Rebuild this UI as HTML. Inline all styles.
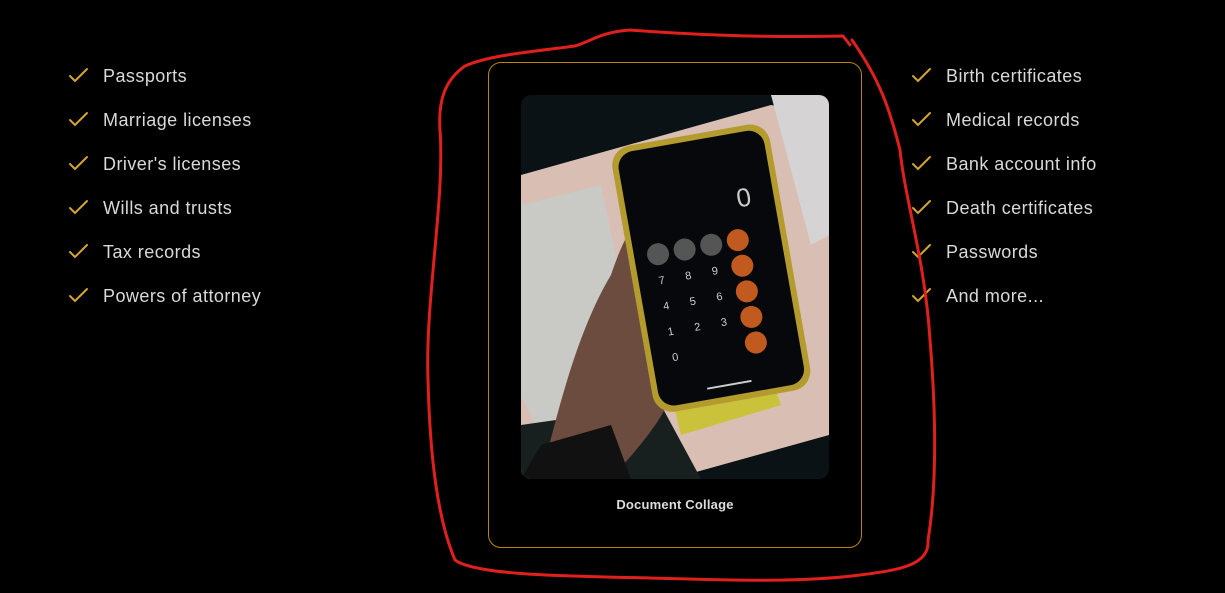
<!DOCTYPE html>
<html><head><style>
html,body{margin:0;padding:0;background:#000;width:1225px;height:593px;overflow:hidden;font-family:"Liberation Sans",sans-serif;}
.li{position:absolute;color:#d9d9d9;font-size:18px;line-height:20px;letter-spacing:0.45px;}
.card{position:absolute;left:488px;top:62px;width:374px;height:486px;border:1px solid #b8860b;border-radius:13px;box-sizing:border-box;}
.img{position:absolute;left:521px;top:95px;width:308px;height:384px;border-radius:10px;overflow:hidden;}
.cap{position:absolute;left:488px;width:374px;top:497px;text-align:center;color:#ddd;font-size:13px;font-weight:bold;letter-spacing:0.2px;}
</style></head><body>
<div class="li" style="left:103px;top:66px">Passports</div>
<div class="li" style="left:103px;top:110px">Marriage licenses</div>
<div class="li" style="left:103px;top:154px">Driver's licenses</div>
<div class="li" style="left:103px;top:198px">Wills and trusts</div>
<div class="li" style="left:103px;top:242px">Tax records</div>
<div class="li" style="left:103px;top:286px">Powers of attorney</div>
<div class="li" style="left:946px;top:66px">Birth certificates</div>
<div class="li" style="left:946px;top:110px">Medical records</div>
<div class="li" style="left:946px;top:154px">Bank account info</div>
<div class="li" style="left:946px;top:198px">Death certificates</div>
<div class="li" style="left:946px;top:242px">Passwords</div>
<div class="li" style="left:946px;top:286px">And more...</div>
<svg width="1225" height="593" style="position:absolute;left:0;top:0" fill="none" stroke="#d4a72c" stroke-width="2" stroke-linecap="round">
<g id="c"><path d="M70 76l5 5 12-12"/><path d="M70 120l5 5 12-12"/><path d="M70 164l5 5 12-12"/><path d="M70 208l5 5 12-12"/><path d="M70 252l5 5 12-12"/><path d="M70 296l5 5 12-12"/></g>
<use href="#c" x="843"/>
</svg>
<div class="card"></div>
<div class="img">
<svg width="308" height="384" viewBox="0 0 308 384">
<rect width="308" height="384" fill="#0a1216"/>
<polygon points="0,80 250,10 308,20 308,340 150,384 0,384" fill="#d9bfb3"/>
<polygon points="0,110 80,90 130,330 30,360 0,300" fill="#c9c9c6"/>
<polygon points="250,0 308,0 308,140 290,150" fill="#d6d3d4"/>
<polygon points="150,300 250,280 260,310 160,340" fill="#c9c23a"/>
<polygon points="0,330 140,310 180,384 0,384" fill="#17201f"/>
<path d="M20 384 C40 300 60 230 90 180 C100 150 110 130 120 125 L135 140 L150 300 C140 330 110 360 90 384Z" fill="#6b4c3e"/>
<path d="M0 384 L20 350 L90 330 L110 384Z" fill="#111"/>
<g transform="rotate(-10 190 160)">
<rect x="108" y="38" width="160" height="270" rx="20" fill="#b39b2d"/>
<rect x="114" y="44" width="148" height="258" rx="16" fill="#06080b"/>
<text x="225" y="118" fill="#ccc" font-size="26" font-family="Liberation Sans">0</text>
<g font-size="11" font-family="Liberation Sans" fill="#ccc">
<circle cx="138" cy="150" r="11" fill="#555"/><circle cx="165" cy="150" r="11" fill="#555"/><circle cx="192" cy="150" r="11" fill="#555"/>
<circle cx="219" cy="150" r="11" fill="#c05a1e"/><circle cx="219" cy="176" r="11" fill="#c05a1e"/><circle cx="219" cy="202" r="11" fill="#c05a1e"/><circle cx="219" cy="228" r="11" fill="#c05a1e"/><circle cx="219" cy="254" r="11" fill="#c05a1e"/>
<text x="134" y="180">7</text><text x="161" y="180">8</text><text x="188" y="180">9</text>
<text x="134" y="206">4</text><text x="161" y="206">5</text><text x="188" y="206">6</text>
<text x="134" y="232">1</text><text x="161" y="232">2</text><text x="188" y="232">3</text>
<text x="134" y="258">0</text></g>
<rect x="163" y="290" width="45" height="2" fill="#ccc"/>
</g>
</svg>
</div>
<div class="cap">Document Collage</div>
<svg width="1225" height="593" style="position:absolute;left:0;top:0" fill="none" stroke="#e0201c" stroke-width="3" stroke-linecap="round" stroke-linejoin="round">
<path d="M850 45 L843 36 C760 38 680 34 630 30 C600 32 590 42 575 46 C530 52 490 55 465 66 C445 80 438 100 440 130 C445 200 425 300 428 380 C430 460 438 520 455 560 C475 575 560 576 650 578 C720 580 800 583 860 575 C900 570 930 565 928 540 C938 480 935 400 930 340 C925 260 905 200 900 150 C890 110 880 80 852 40"/>
</svg>
</body></html>
